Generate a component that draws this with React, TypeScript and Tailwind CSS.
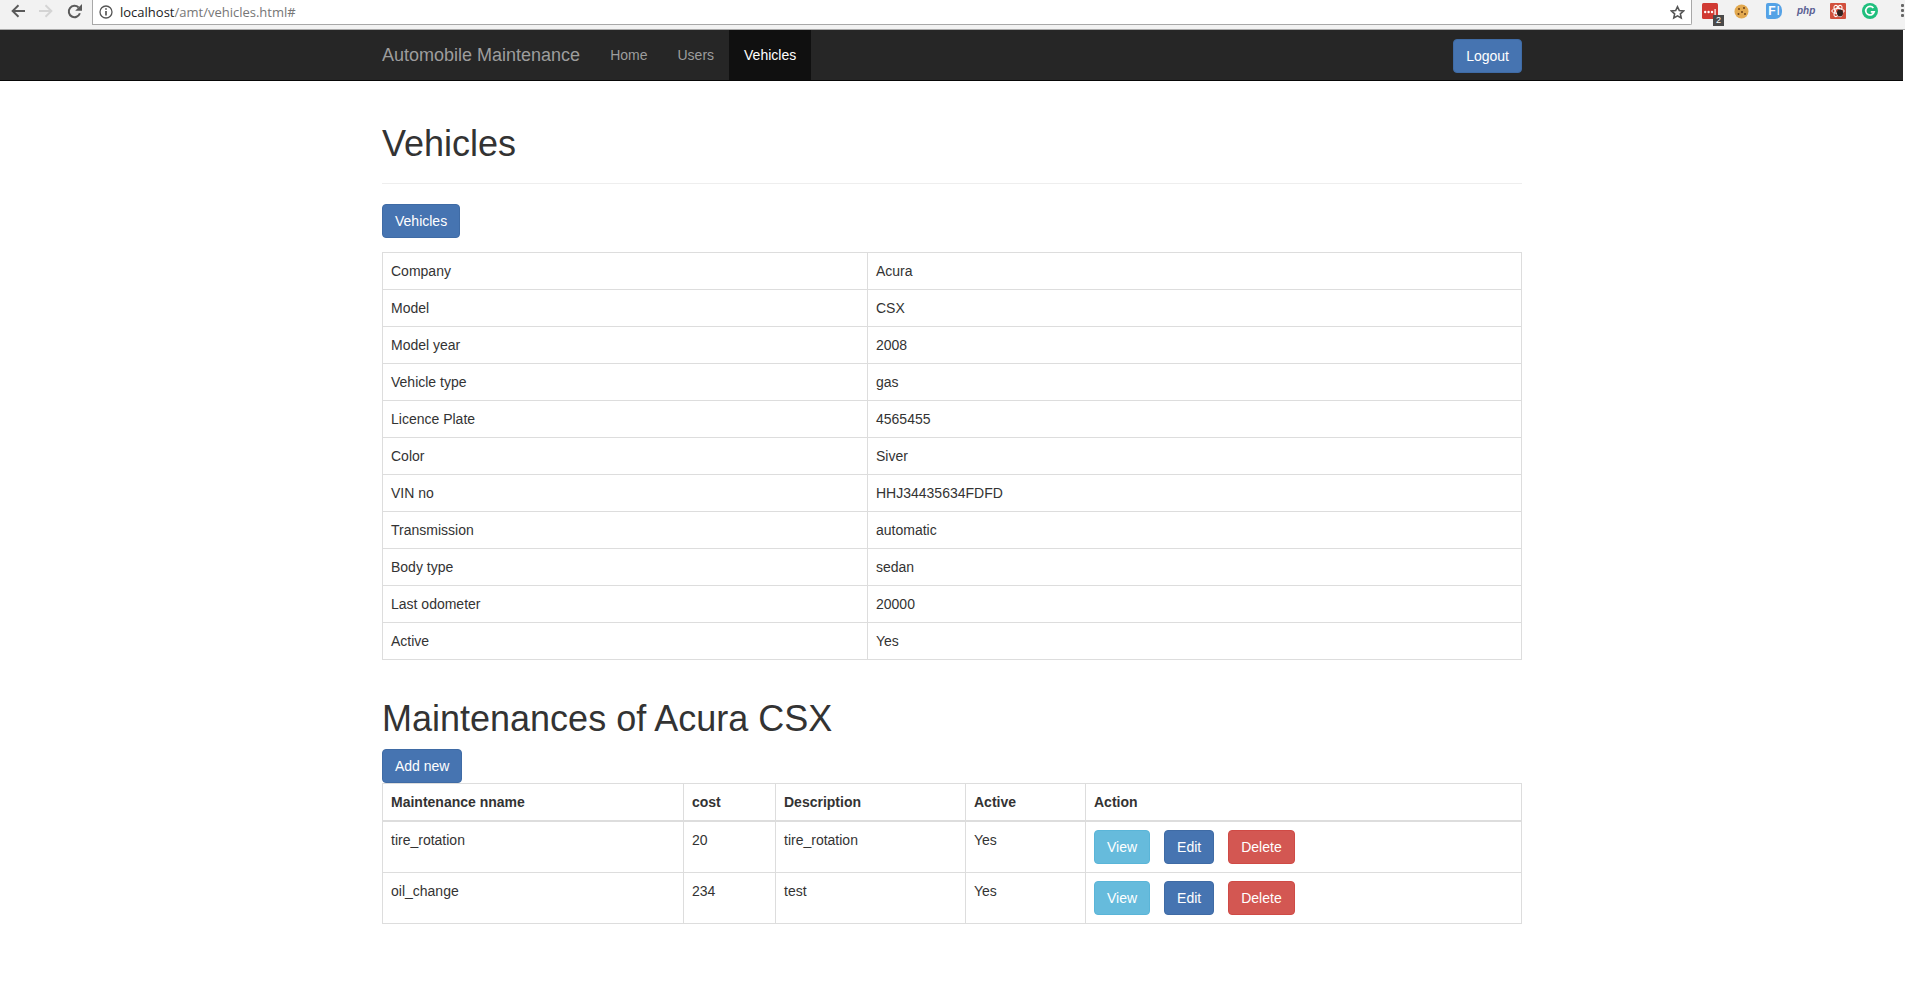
import React from "react";

const btn = "inline-block rounded-[4px] border text-[14px] leading-[20px] px-[12px] py-[6px] text-white";
const blue = "bg-[#4674b1] border-[#3f6ba5]";
const info = "bg-[#66bbdc] border-[#5ab5d8]";
const red = "bg-[#d35752] border-[#cf4a45]";

const details: [string, string][] = [
  ["Company", "Acura"],
  ["Model", "CSX"],
  ["Model year", "2008"],
  ["Vehicle type", "gas"],
  ["Licence Plate", "4565455"],
  ["Color", "Siver"],
  ["VIN no", "HHJ34435634FDFD"],
  ["Transmission", "automatic"],
  ["Body type", "sedan"],
  ["Last odometer", "20000"],
  ["Active", "Yes"],
];

const maint = [
  ["tire_rotation", "20", "tire_rotation", "Yes"],
  ["oil_change", "234", "test", "Yes"],
];

const td = "border border-[#dddddd] p-[8px] align-top leading-[20px]";
const th = "border border-[#dddddd] border-b-2 p-[8px] text-left font-bold leading-[20px]";

function Toolbar() {
  return (
    <div className="flex h-[30px] items-stretch border-b border-[#a9a9a9] bg-[#f2f2f2] font-['Liberation_Sans',Arial,sans-serif]">
      <div className="flex w-[92px] shrink-0 items-center gap-[14px] pb-[7px] pl-[11px]">
        <svg width="14" height="14" viewBox="0 0 14 14" className="shrink-0" fill="none" stroke="#5a5a5a" strokeWidth="1.9">
          <path d="M14 7H2M7.5 1.2L1.6 7l5.9 5.8" />
        </svg>
        <svg width="14" height="14" viewBox="0 0 14 14" className="shrink-0" fill="none" stroke="#d4d4d4" strokeWidth="1.9">
          <path d="M0 7h12M6.5 1.2L12.4 7l-5.9 5.8" />
        </svg>
        <svg width="15" height="15" viewBox="0 0 15 15" className="shrink-0" fill="none" stroke="#5a5a5a" strokeWidth="2">
          <path d="M12.9 9.3A5.7 5.7 0 1 1 11.6 3.5" />
          <path d="M15 0v6.8H8.2z" fill="#5a5a5a" stroke="none" />
        </svg>
      </div>
      <div className="flex h-[25px] flex-1 items-center rounded-br-[2px] border-b border-l border-r border-[#a8a8a8] bg-white pl-[6px]">
        <svg width="14" height="14" viewBox="0 0 14 14" fill="none" className="shrink-0">
          <circle cx="7" cy="7" r="6" stroke="#555" strokeWidth="1.3" />
          <path d="M7 6v4.4" stroke="#555" strokeWidth="1.7" />
          <path d="M7 3.2v1.6" stroke="#555" strokeWidth="1.7" />
        </svg>
        <div className="ml-[7px] text-[13px] leading-[20px] font-['Open_Sans',sans-serif] text-[#767676]">
          <span className="text-[#222222]">localhost</span>/amt/vehicles.html#
        </div>
        <svg width="15" height="15" viewBox="0 0 24 24" className="ml-auto mr-[6px]" fill="none" stroke="#555" strokeWidth="2.6">
          <path d="M12 2.8l2.9 6 6.6.8-4.9 4.5 1.3 6.5-5.9-3.3-5.9 3.3 1.3-6.5-4.9-4.5 6.6-.8z" />
        </svg>
      </div>
      <div className="relative w-[213px] shrink-0">
        <svg width="16" height="16" viewBox="0 0 16 16" className="absolute left-[10px] top-[3px]">
          <rect width="16" height="16" rx="1.5" fill="#d03a33" />
          <circle cx="3.2" cy="9" r="1.2" fill="#fff" />
          <circle cx="6.6" cy="9" r="1.2" fill="#fff" />
          <circle cx="10" cy="9" r="1.2" fill="#fff" />
          <rect x="12.5" y="6" width="1.2" height="6" fill="#fff" />
        </svg>
        <div className="absolute left-[21px] top-[15px] flex h-[11px] w-[11px] items-center justify-center bg-[#4a4a4a] text-[9px] leading-none text-white">2</div>
        <svg width="15" height="15" viewBox="0 0 15 15" className="absolute left-[42px] top-[4px]">
          <circle cx="7.5" cy="7.5" r="7" fill="#e2a94f" />
          <circle cx="5" cy="5" r="1" fill="#6b3f16" />
          <circle cx="10" cy="4" r="1" fill="#6b3f16" />
          <circle cx="8" cy="8" r="1" fill="#6b3f16" />
          <circle cx="4.5" cy="10" r="1" fill="#6b3f16" />
          <circle cx="11" cy="10" r="1" fill="#6b3f16" />
        </svg>
        <div className="absolute left-[74px] top-[3px] flex h-[16px] w-[16px] items-center justify-center overflow-hidden rounded-l-[2px] rounded-r-[7px] bg-[#55a2e6] text-[12px] font-bold leading-none text-white">
          <span>F</span>
          <span className="ml-[1px] font-normal">I</span>
        </div>
        <div className="absolute left-[105px] top-[3px] text-[10px] font-bold italic leading-[16px] text-[#5a5f93]">php</div>
        <svg width="16" height="16" viewBox="0 0 16 16" className="absolute left-[138px] top-[3px]">
          <rect width="16" height="16" rx="1" fill="#d2503d" />
          <ellipse cx="8" cy="8" rx="6.2" ry="2.6" fill="none" stroke="#fff" strokeWidth="1" transform="rotate(60 8 8)" />
          <ellipse cx="8" cy="8" rx="6.2" ry="2.6" fill="none" stroke="#fff" strokeWidth="1" transform="rotate(-60 8 8)" />
          <ellipse cx="8" cy="8" rx="6.2" ry="2.6" fill="none" stroke="#fff" strokeWidth="1" />
          <ellipse cx="10" cy="10" rx="3" ry="3.4" fill="#33221f" />
        </svg>
        <svg width="16" height="16" viewBox="0 0 16 16" className="absolute left-[170px] top-[3px]">
          <circle cx="8" cy="8" r="8" fill="#1fbf7d" />
          <path d="M11.4 5A4.3 4.3 0 1 0 12.2 8.8H8.8" fill="none" stroke="#fff" strokeWidth="1.7" />
        </svg>
        <div className="absolute left-[209px] top-[4px] flex flex-col gap-[2px]">
          <i className="h-[3px] w-[3px] rounded-[1px] bg-[#666]" />
          <i className="h-[3px] w-[3px] rounded-[1px] bg-[#666]" />
          <i className="h-[3px] w-[3px] rounded-[1px] bg-[#666]" />
        </div>
      </div>
    </div>
  );
}

export default function App() {
  return (
    <div className="h-[1003px] overflow-hidden bg-white font-['Liberation_Sans',Arial,sans-serif] text-[14px] leading-[20px] text-[#333333]">
      <Toolbar />
      <nav className="mr-[2px] h-[51px] border-b border-[#080808] bg-[#262626]">
        <div className="ml-[382px] flex w-[1140px] items-stretch">
          <a className="py-[15px] pr-[15px] text-[18px] leading-[20px] text-[#9d9d9d]">Automobile Maintenance</a>
          <a className="px-[15px] py-[15px] text-[#9d9d9d]">Home</a>
          <a className="px-[15px] py-[15px] text-[#9d9d9d]">Users</a>
          <a className="bg-[#101010] px-[15px] py-[15px] text-white">Vehicles</a>
          <div className="ml-auto pt-[9px]">
            <a className={`${btn} ${blue}`}>Logout</a>
          </div>
        </div>
      </nav>
      <main className="ml-[382px] w-[1140px]">
        <div className="mb-[20px] mt-[43px] border-b border-[#eeeeee] pb-[9px]">
          <h1 className="mb-[10px] text-[36px] font-medium leading-[40px]">Vehicles</h1>
        </div>
        <a className={`${btn} ${blue}`}>Vehicles</a>
        <table className="mb-[20px] mt-[14px] w-full table-fixed border-collapse">
          <colgroup>
            <col className="w-[485px]" />
            <col />
          </colgroup>
          <tbody>
            {details.map(([k, v]) => (
              <tr key={k}>
                <td className={td}>{k}</td>
                <td className={td}>{v}</td>
              </tr>
            ))}
          </tbody>
        </table>
        <h1 className="mb-[10px] mt-[39px] text-[36px] font-medium leading-[40px]">Maintenances of Acura CSX</h1>
        <a className={`${btn} ${blue} align-top`}>Add new</a>
        <table className="w-full table-fixed border-collapse">
          <colgroup>
            <col className="w-[301px]" />
            <col className="w-[92px]" />
            <col className="w-[190px]" />
            <col className="w-[120px]" />
            <col />
          </colgroup>
          <thead>
            <tr>
              <th className={th}>Maintenance nname</th>
              <th className={th}>cost</th>
              <th className={th}>Description</th>
              <th className={th}>Active</th>
              <th className={th}>Action</th>
            </tr>
          </thead>
          <tbody>
            {maint.map((r) => (
              <tr key={r[0]}>
                {r.map((c, i) => (
                  <td key={i} className={td}>{c}</td>
                ))}
                <td className={td}>
                  <div className="flex gap-[14px]">
                    <a className={`${btn} ${info}`}>View</a>
                    <a className={`${btn} ${blue}`}>Edit</a>
                    <a className={`${btn} ${red}`}>Delete</a>
                  </div>
                </td>
              </tr>
            ))}
          </tbody>
        </table>
      </main>
    </div>
  );
}
